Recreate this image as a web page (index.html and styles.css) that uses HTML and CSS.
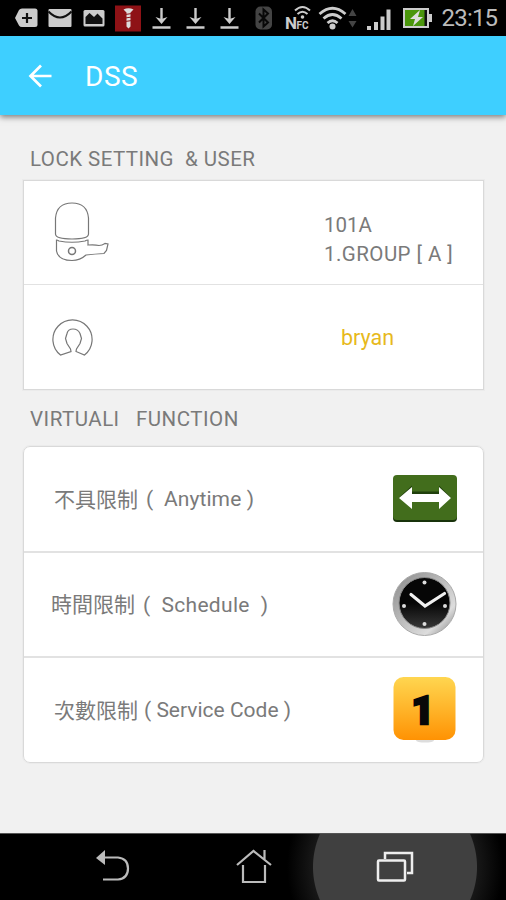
FILE: index.html
```html
<!DOCTYPE html>
<html lang="zh-Hant">
<head>
  <meta charset="UTF-8" />
  <meta name="viewport" content="width=device-width, initial-scale=1.0"/>
  <title>DSS</title>
  <link rel="stylesheet" href="styles.css">
</head>
<body>
  <div class="status-bar">
    <div class="slot"><svg width="34" height="36" viewBox="0 0 34 36"><path d="M6 18l4-8q1-1.500 3-1.500h13q2.500 0 2.500 2.500v13.500q0 2.500-2.500 2.500H13q-2 0-3-1.500z" fill="#ccc"/><path d="M18 13v10M13 18h10" stroke="#111" stroke-width="2.200"/></svg></div>
    <div class="slot"><svg width="34" height="36" viewBox="0 0 34 36"><rect x="5.500" y="9" width="23" height="18" rx="1" fill="#ccc"/><path d="M5.500 11.500q11.500 12 23 0" fill="none" stroke="#111" stroke-width="2"/></svg></div>
    <div class="slot"><svg width="34" height="36" viewBox="0 0 34 36"><path d="M8 10h18q1.500 0 1.500 1.500v13.500q0 1.500-1.500 1.500H8q-1.500 0-1.500-1.500V11.500Q6.500 10 8 10z" fill="#ccc"/><path d="M8.500 24v-7l4-4 4.500 4 3.500-3.500 5 5V24z" fill="#111"/></svg></div>
    <div class="slot"><svg width="34" height="36" viewBox="0 0 34 36"><rect x="4" y="5.500" width="26" height="26" fill="#8e1216"/><path d="M12.500 9.500q5-2.500 10 0l-3 3v14l-2 2-2-2v-14z" fill="#ddd"/><path d="M14 14.500l7-1M14 18l7-1M14 21.500l7-1" stroke="#8e1216"/></svg></div>
    <div class="slot"><svg width="34" height="36" viewBox="0 0 34 36"><path d="M16.500 8v12M7.500 27.500h18" stroke="#ccc" stroke-width="2.400"/><path d="M10.500 17l6 7 6-7-6 2z" fill="#ccc"/></svg></div>
    <div class="slot"><svg width="34" height="36" viewBox="0 0 34 36"><path d="M16.500 8v12M7.500 27.500h18" stroke="#ccc" stroke-width="2.400"/><path d="M10.500 17l6 7 6-7-6 2z" fill="#ccc"/></svg></div>
    <div class="slot"><svg width="34" height="36" viewBox="0 0 34 36"><path d="M16.500 8v12M7.500 27.500h18" stroke="#ccc" stroke-width="2.400"/><path d="M10.500 17l6 7 6-7-6 2z" fill="#ccc"/></svg></div>
    <div class="slot"><svg width="34" height="36" viewBox="0 0 34 36"><rect x="8.500" y="6.500" width="16.500" height="23" rx="5" fill="#444"/><path d="M12 13.500l9 9-4.500 4v-17l4.500 4-9 9" fill="none" stroke="#080808" stroke-width="2"/></svg></div>
    <div class="slot"><svg width="34" height="36" viewBox="0 0 34 36"><text class="nfc-n" x="4" y="28.500">N</text><text class="nfc-fc" x="15.500" y="29">FC</text><path d="M14 10.500q7.500-7 15 0M16.500 14q5-4.500 10 0" fill="none" stroke="#ccc" stroke-width="2"/><circle cx="21.500" cy="17" r="1.800" fill="#ccc"/></svg></div>
    <svg class="wifi" width="40" height="36" viewBox="0 0 40 36"><g fill="none" stroke="#ccc" stroke-width="2.800"><path d="M1.500 14q13-11.500 26 0M5.500 18.500q9-8 18 0M9.500 23q5-4.500 10 0"/></g><circle cx="14.500" cy="26.500" r="3" fill="#ccc"/><path d="M30.500 16l4-7 4 7zM30.500 21l4 6.500 4-6.500z" fill="#444"/></svg>
    <svg class="signal" width="26" height="36" viewBox="0 0 26 36"><path d="M1 26h4v4H1zM8 22h4v8H8zM14.500 16.500h4V30h-4zM20.500 9.500h4V30h-4z" fill="#ccc"/></svg>
    <svg class="battery" width="30" height="36" viewBox="0 0 30 36"><rect x="1" y="9" width="24" height="18" fill="#4a960b" stroke="#ccc" stroke-width="2"/><path d="M21.500 10H24v16h-2.500z" fill="#111"/><path d="M25 14h4v8h-4z" fill="#ccc"/><path d="M17 10l-10 9h5l-2 7 10-9h-5z" fill="#ddd"/></svg>
    <span class="clock">23:15</span>
  </div>

  <header>
    <svg width="24" height="24" viewBox="0 0 24 24" fill="none" stroke="#fff" stroke-width="2.700"><path d="M13 1.500L2.500 12 13 22.500M2 12h21.500"/></svg>
    <h1>DSS</h1>
  </header>

  <div class="container">
    <h2 class="lock-title">LOCK SETTING  &amp; USER</h2>
    <div class="card square">
      <div class="row">
        <svg class="lock-icon" width="56" height="60" viewBox="0 0 56 60" fill="none" stroke="#777" stroke-width="1.200">
          <path d="M1.500 16C2.500 5 9 1 18 1s15.500 4 16.500 15v16q0 5-16.500 5T1.500 32z"/>
          <path d="M2.500 38v11q2 9.500 15.500 9.500 8 0 14-5.500 9-1 18-1.500l2.500-3 1.500-6.500-3-.5q-3 2-6 2-4-1-11-.5V38q-1.500 0-3 1-13 2.500-26 0-1.500-1-2.500-1z"/>
          <circle cx="18" cy="49" r="3.500" stroke-width="1.500"/>
        </svg>
        <div class="lock-name"><span>101A</span><br><span class="group">1.GROUP [ A ]</span></div>
      </div>
      <div class="row">
        <svg class="user-icon" width="42" height="42" viewBox="0 0 42 42" fill="none" stroke="#777" stroke-width="1.200">
          <path d="M8.500 39A19.600 19.600 0 1 1 32.500 39l-8.500-3.500.5-2.500 3.500-5.500 1.500-5-1.500-5q-2-4.500-7-4.500t-6 4.500l-1.500 5 1.500 5 3.500 5.500.5 2.500z"/>
        </svg>
        <div class="user-name">bryan</div>
      </div>
    </div>

    <h2 class="function-title">VIRTUALl   FUNCTION</h2>
    <div class="card">
      <div class="row">
        <div class="label anytime"><span class="zh">不具限制</span><span class="en">(  Anytime )</span></div>
        <svg class="option-icon" width="66" height="48" viewBox="0 0 66 48">
          <rect x="1" y="2" width="64" height="45" rx="4" fill="#18320b"/>
          <rect x="1" y="0" width="64" height="45" rx="4" fill="#426d1c"/>
          <path d="M7 22.500l13-12v6h27v-6l12 12" fill="#20400c"/>
          <path d="M7 23l13-11v7h27v-7l12 11-12 11v-7H20v7z" fill="#fff"/>
        </svg>
      </div>
      <div class="row">
        <div class="label schedule"><span class="zh">時間限制</span><span class="en">(  Schedule  )</span></div>
        <svg class="option-icon" width="66" height="66" viewBox="0 0 66 66">
          <defs>
            <linearGradient id="rim" x1="0" y1="0" x2="1" y2="1"><stop offset="0" stop-color="#888"/><stop offset=".45" stop-color="#bbb"/><stop offset=".75" stop-color="#ddd"/><stop offset="1" stop-color="#777"/></linearGradient>
            <linearGradient id="face" x1="0" y1="0" x2="0" y2="1"><stop offset=".5" stop-color="#060606"/><stop offset="1" stop-color="#383838"/></linearGradient>
          </defs>
          <circle cx="32.500" cy="33" r="31.500" fill="url(#rim)" stroke="#aaa"/>
          <circle cx="32.500" cy="32" r="25.500" fill="url(#face)" stroke="#888"/>
          <g fill="#ddd"><circle cx="32.500" cy="11.500" r="2"/><circle cx="32.500" cy="53" r="2"/><circle cx="12" cy="35" r="2"/><circle cx="53" cy="35" r="2"/></g>
          <path d="M19 23.500l14 11.500 19.500-12.500" fill="none" stroke="#f0f0f0" stroke-width="3.200" stroke-linecap="round"/>
        </svg>
      </div>
      <div class="row">
        <div class="label service"><span class="zh">次數限制</span><span class="en">( Service Code )</span></div>
        <svg width="66" height="66" viewBox="0 0 66 66">
          <defs><linearGradient id="gold" x1="0" y1="0" x2="0" y2="1"><stop offset="0" stop-color="#ffd650"/><stop offset=".5" stop-color="#ffb52a"/><stop offset="1" stop-color="#ff9203"/></linearGradient></defs>
          <ellipse cx="33" cy="63.500" rx="9" ry="2" fill="#ddd"/>
          <rect x="1.500" y="0" width="62" height="63" rx="10" fill="url(#gold)"/>
          <text class="one" x="19.500" y="46.500">1</text>
        </svg>
      </div>
    </div>
  </div>

  <nav>
    <div class="key"><svg width="36" height="36" viewBox="0 0 36 36"><path d="M9 8.500h14q10 1 10 11t-10 11H8" fill="none" stroke="#bbb" stroke-width="2.200"/><path d="M1 9l9-8v15z" fill="#bbb"/></svg></div>
    <div class="key"><svg width="36" height="36" viewBox="0 0 36 36" fill="none" stroke="#bbb" stroke-width="2.200"><path d="M1 16L17.500 2 35 16M7 16v17h22V16M28.500 11V1"/></svg></div>
    <div class="key pressed"><svg width="38" height="32" viewBox="0 0 38 32" fill="none" stroke="#eee" stroke-width="2.500"><path d="M9 8V2h27v20h-5"/><rect x="2" y="9.500" width="27" height="20" rx="1"/></svg></div>
  </nav>
</body>
</html>
```

FILE: styles.css
```css
* { box-sizing: border-box; }
body {
  margin: 0;
  height: 900px;
  display: flex;
  flex-direction: column;
  overflow: hidden;
  background: #f1f1f1;
  font-family: Roboto, "Noto Sans CJK TC", sans-serif;
  color: #7a7a7a;
}
svg { display: block; flex: none; }
.status-bar {
  height: 36px;
  flex: none;
  display: flex;
  align-items: center;
  padding-left: 8.5px;
  background: #000;
}
.slot { width: 34px; flex: none; }
.nfc-n { font-size: 17px; font-weight: bold; fill: #ccc; }
.nfc-fc { font-size: 10px; font-weight: bold; fill: #ccc; }
.wifi { margin-left: 3px; }
.signal { margin-left: 8px; }
.battery { margin-left: 11px; }
.clock { margin-left: 9px; font-size: 24px; line-height: 36px; letter-spacing: -0.8px; color: #bbb; }
header {
  height: 79px;
  flex: none;
  display: flex;
  align-items: center;
  gap: 33px;
  padding-left: 28px;
  background: #3ecfff;
  color: #fff;
  box-shadow: 0 2px 6px rgba(0,0,0,0.5);
}
h1 { margin: 1px 0 0; font-size: 28px; font-weight: normal; letter-spacing: 0.5px; }
.container { flex: 1; padding: 29px 22px 0 23px; }
h2 {
  margin: 0;
  padding-left: 7px;
  height: 36px;
  line-height: 31px;
  font-size: 20.5px;
  font-weight: normal;
  letter-spacing: 0.45px;
  white-space: pre;
}
.function-title { height: 42px; line-height: 30px; letter-spacing: 0.5px; }
.card {
  border: 1px solid #d9d9d9;
  outline: 1px solid #ebebeb;
  border-radius: 7px;
  background: #fff;
}
.square { border-radius: 0; margin-bottom: 14px; }
.row {
  height: 105px;
  display: flex;
  align-items: center;
  justify-content: space-between;
  padding: 0 25px 0 30px;
}
.row + .row { border-top: 2px solid #e2e2e2; }
.row:first-child { height: 104px; }
.row:last-child { height: 106px; }
.square .row:first-child { height: 103px; }
.square .row:last-child { height: 105px; border-top-width: 1px; }
.lock-icon { margin-top: -1px; }
.lock-name {
  width: 134px;
  margin-top: 14px;
  font-size: 20.5px;
  line-height: 28.5px;
  white-space: nowrap;
}
.group { letter-spacing: 0.45px; }
.user-icon { margin-left: -2px; }
.user-name { width: 117px; font-size: 21.5px; color: #e7b91c; }
.label { display: flex; align-items: center; font-size: 21px; white-space: pre; }
.zh { margin-top: -3px; }
.en { margin-left: 8px; }
.anytime .en { letter-spacing: 0.1px; }
.schedule { margin-left: -3px; }
.schedule .en { letter-spacing: 0.3px; }
.service .en { margin-left: 6px; }
.option-icon { margin-top: -1px; }
.one { font-family: Roboto, sans-serif; font-size: 39px; font-weight: 900; fill: #080808; stroke: #080808; stroke-width: 2.5; }
nav {
  height: 67px;
  flex: none;
  display: flex;
  padding-left: 42.5px;
  border-top: 1px solid #555;
  background: #000;
}
.key { width: 141px; flex: none; display: flex; align-items: center; justify-content: center; }
.pressed {
  width: 222px;
  margin-left: -40.5px;
  background: radial-gradient(circle at center, #404040 81.5px, #171717 82.5px, #000 108px);
}
```
